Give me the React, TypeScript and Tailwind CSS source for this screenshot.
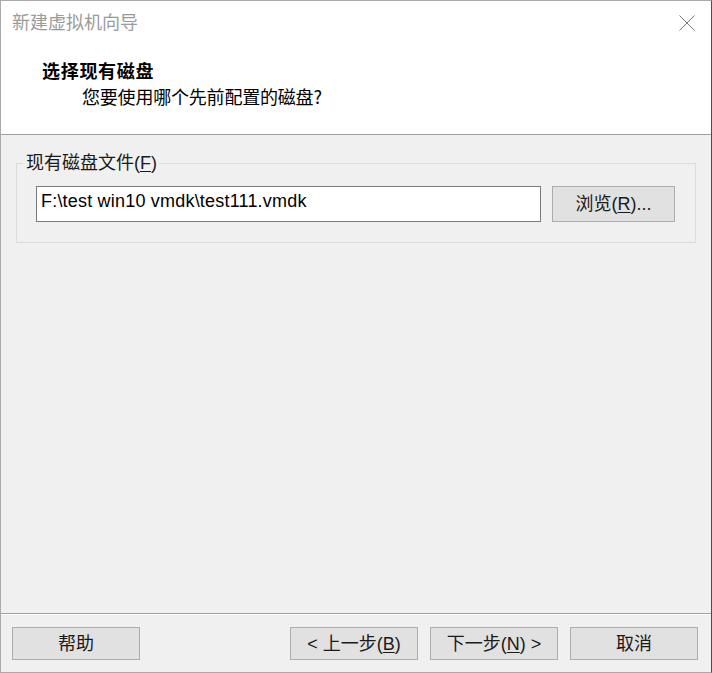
import React from "react";

const U = ({ children }: { children: React.ReactNode }) => (
  <span className="underline underline-offset-[2px] decoration-1">{children}</span>
);

function Btn({ children }: { children: React.ReactNode }) {
  return (
    <div className="w-[128px] h-[33px] bg-[#e1e1e1] border border-[#adadad] flex items-center justify-center text-[18px] leading-[20px] text-[#1a1a1a]">
      {children}
    </div>
  );
}

export default function App() {
  return (
    <div className="w-[712px] h-[673px] border border-[#aaaaaa] border-r-[#4d4d4d] bg-[#f0f0f0] flex flex-col font-['Liberation_Sans','Noto_Sans_CJK_SC',sans-serif] text-[#000]">
      {/* header */}
      <div className="h-[133px] bg-white flex flex-col">
        <div className="h-[46px] flex justify-between items-start pt-[12px] pl-[11px] pr-[16px]">
          <div className="text-[18px] leading-[20px] text-[#9a9a9a]">新建虚拟机向导</div>
          <svg width="16" height="16" viewBox="0 0 16 16" className="mt-[2px]">
            <path d="M0.5 0.5 L15.5 15.5 M15.5 0.5 L0.5 15.5" stroke="#7a7a7a" strokeWidth="1" fill="none" />
          </svg>
        </div>
        <div className="mt-[13px] pl-[41px] text-[18px] leading-[20px] font-bold tracking-[0.7px] font-['Noto_Sans_CJK_SC',sans-serif]">
          选择现有磁盘
        </div>
        <div className="mt-[6px] pl-[81px] text-[18px] leading-[20px] tracking-[-0.2px] font-['Noto_Sans_CJK_SC',sans-serif]">
          您要使用哪个先前配置的磁盘?
        </div>
      </div>
      <div className="h-px bg-[#a0a0a0]" />
      {/* content */}
      <div className="flex-1 px-[15px] pt-[28px]">
        <div className="relative border border-[#dcdcdc] pt-[22px] pb-[20px] pl-[19px] pr-[20px] flex gap-[11px]">
          <div className="absolute left-[6px] -top-[13px] bg-[#f0f0f0] pl-[3px] pr-[2px] text-[18px] leading-[24px] text-[#1a1a1a]">
            现有磁盘文件(<U>F</U>)
          </div>
          <div className="w-[505px] h-[36px] bg-white border border-[#7a7a7a] px-[4px] text-[18px] leading-[28px] tracking-[0.2px]">
            F:\test win10 vmdk\test111.vmdk
          </div>
          <div className="w-[123px] h-[36px] bg-[#e1e1e1] border border-[#adadad] flex items-center justify-center text-[18px] leading-[20px] text-[#1a1a1a]">
            浏览(<U>R</U>)...
          </div>
        </div>
      </div>
      <div className="h-px bg-[#a0a0a0]" />
      <div className="h-px bg-white" />
      {/* footer */}
      <div className="h-[57px] flex items-center justify-between pl-[11px] pr-[13px]">
        <Btn>帮助</Btn>
        <div className="flex gap-[12px]">
          <Btn>
            <span>&lt; 上一步(<U>B</U>)</span>
          </Btn>
          <Btn>
            <span>下一步(<U>N</U>) &gt;</span>
          </Btn>
          <Btn>取消</Btn>
        </div>
      </div>
    </div>
  );
}
